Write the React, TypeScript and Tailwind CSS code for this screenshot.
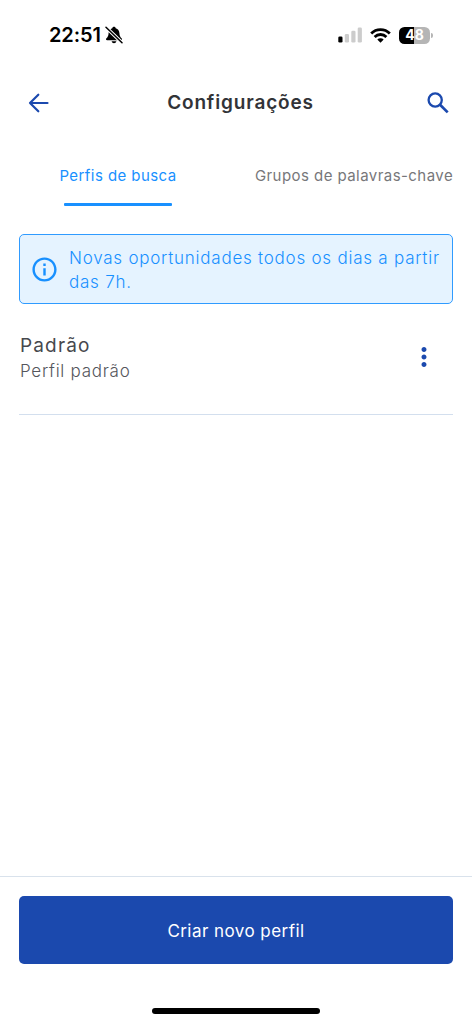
import React, { useState } from 'react';
import { MdInfoOutline, MdMoreVert } from 'react-icons/md';

interface SearchProfile {
  id: string;
  name: string;
  description: string;
}

const profiles: SearchProfile[] = [{ id: 'default', name: 'Padrão', description: 'Perfil padrão' }];

function StatusBar() {
  return (
    <div className="h-[70px] flex items-center pl-[49px] pr-[39px] text-black">
      <span className="w-[53px] text-[20px] font-semibold leading-none tracking-[-0.1px] whitespace-nowrap">22:51</span>
      <svg className="ml-[3px] w-[18px] h-[18px]" viewBox="0 0 18 18" fill="none">
        <path
          d="M9 .8c-.9 0-1.600.6-1.700 1.400C5 2.900 3.700 4.600 3.600 7c-.1 3-1 4.200-2.200 5.300-.8.8-.4 1.900.7 1.900h13.800c1.100 0 1.500-1.100.7-1.900-1.200-1.100-2.100-2.300-2.200-5.300-.1-2.400-1.400-4.100-3.700-4.800C10.600 1.400 9.900.8 9 .8ZM6.600 15.200c.3 1.200 1.200 2 2.400 2s2.100-.8 2.400-2Z"
          fill="#000"
        />
        <path d="M1 1.300 17 16.700" stroke="#fff" strokeWidth="3.400" />
        <path d="M1 1.300 17 16.700" stroke="#000" strokeWidth="1.500" strokeLinecap="round" />
      </svg>

      <div className="ml-auto flex items-center">
        <svg className="w-[24px] h-[16px]" viewBox="0 0 24 16">
          <rect x="0.300" y="9.500" width="4.200" height="6" rx="1.300" fill="#000" />
          <rect x="6.800" y="7" width="4.200" height="8.500" rx="1.300" fill="#ccc" />
          <rect x="13.300" y="3.700" width="4.200" height="11.800" rx="1.300" fill="#ccc" />
          <rect x="19.700" y="0.500" width="4.200" height="15" rx="1.300" fill="#ccc" />
        </svg>
        <svg className="ml-[8px] w-[21px] h-[15px]" viewBox="0 0 21 15" fill="none" stroke="#000" strokeWidth="2.800">
          <path d="M1.200 5.400a13.200 13.200 0 0 1 18.600 0" />
          <path d="M4.600 8.900a8.400 8.400 0 0 1 11.800 0" />
          <path d="M10.500 14.800 7.300 11.600a4.600 4.600 0 0 1 6.400 0Z" fill="#000" stroke="none" />
        </svg>
        <div className="ml-[8px] flex h-[17px] w-[31px] items-center justify-center rounded-[5.500px] bg-linear-to-r from-black from-48% to-[#b5b5b5] to-48%">
          <span className="text-[14px] font-bold leading-none text-white">48</span>
        </div>
        <span className="ml-px h-[5px] w-[2px] rounded-r-full bg-[#b5b5b5]" />
      </div>
    </div>
  );
}

export default function App() {
  const [tab, setTab] = useState<'profiles' | 'groups'>('profiles');

  return (
    <div className="flex h-screen w-full flex-col overflow-hidden bg-white font-['Inter',sans-serif]">
      <StatusBar />

      <header className="flex h-[66px] items-center justify-between pl-[28px] pr-[23px]">
        <button aria-label="Voltar" className="w-[22px]">
          <svg className="size-[21px]" viewBox="0 0 21 21" fill="none" stroke="#1b49ae" strokeWidth="2.200" strokeLinecap="round" strokeLinejoin="round">
            <path d="M19.500 10H2M10.300 1.700 2 10l8.300 8.300" />
          </svg>
        </button>
        <h1 className="ml-[4px] text-[19px] font-semibold tracking-[0.840px] text-[#323338]">Configurações</h1>
        <button aria-label="Buscar">
          <svg className="size-[22px]" viewBox="0 0 22 22" fill="none" stroke="#1b49ae" strokeWidth="2.300">
            <circle cx="8.200" cy="8" r="6.600" />
            <path d="m12.800 12.500 7.900 7.900" strokeWidth="2.700" />
          </svg>
        </button>
      </header>

      {/* Tabs */}
      <nav className="flex h-[70px] items-start text-[15px]">
        <button onClick={() => setTab('profiles')} className="flex w-[236px] flex-col items-center pt-[28px]">
          <span className={`leading-6 tracking-[0.430px] ${tab === 'profiles' ? 'text-[#1890ff]' : 'text-[#77777a]'}`}>
            Perfis de busca
          </span>
          <span className={`mt-[15px] h-[3px] w-[108px] rounded-[1px] ${tab === 'profiles' ? 'bg-[#1890ff]' : ''}`} />
        </button>
        <button onClick={() => setTab('groups')} className="flex w-[236px] flex-col items-center pt-[28px]">
          <span className={`whitespace-nowrap leading-6 tracking-[0.440px] ${tab === 'groups' ? 'text-[#1890ff]' : 'text-[#77777a]'}`}>
            Grupos de palavras-chave
          </span>
        </button>
      </nav>

      <main className="flex-1 px-[19px] pt-[28px]">
        <div className="flex h-[70px] items-center rounded-[5px] border-[1.500px] border-[#2f9bff] bg-[#e5f3ff] pl-[10px] text-[#1890ff]">
          <MdInfoOutline className="size-[29px] shrink-0" />
          <p className="ml-[10px] mt-[2px] whitespace-nowrap text-[17px] font-light leading-[24px] tracking-[0.760px]">
            Novas oportunidades todos os dias a partir
            <br />
            das 7h.
          </p>
        </div>

        {profiles.map((profile) => (
          <div key={profile.id} className="flex h-[111px] items-start justify-between border-b border-[#d3dfee] pt-[27px] pl-px pr-[14px]">
            <div className="pt-px">
              <h2 className="text-[19px] leading-[27px] tracking-[1.150px] text-[#47484d]">{profile.name}</h2>
              <p className="text-[17px] font-light leading-[24px] tracking-[0.740px] text-[#55565c]">{profile.description}</p>
            </div>
            <button aria-label="Opções" className="mt-[11px]">
              <MdMoreVert className="size-[30px] text-[#1b49ae]" />
            </button>
          </div>
        ))}
      </main>

      <footer className="flex h-[148px] flex-col items-center border-t border-[#d9e2ec] px-[19px] pt-[19px]">
        <button className="h-[68px] w-full rounded-[5px] bg-[#1b49ae] pt-[3px] text-[17px] tracking-[0.450px] text-white">
          Criar novo perfil
        </button>
        <div className="mt-[44px] h-[6px] w-[168px] rounded-full bg-black" />
      </footer>
    </div>
  );
}
